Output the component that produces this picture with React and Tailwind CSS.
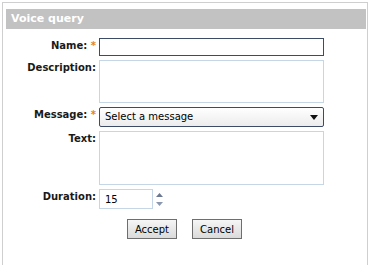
import React from 'react';

const font = { fontFamily: '"DejaVu Sans", Verdana, sans-serif' };

const Row = ({ label, required, children }) => (
  <div className="flex items-start">
    <div className="w-[90px] shrink-0 pt-[2px] text-right text-[10px] font-bold leading-[12px] text-[#1a1a1a]">
      {label}
      {required && <span className="text-[#e8801f]"> *</span>}
    </div>
    <div className="ml-[3px]">{children}</div>
  </div>
);

const App = () => {
  return (
    <div className="h-[265px] w-[370px] overflow-hidden bg-white" style={font}>
      <div className="ml-[2px] mt-[2px] h-[280px] w-[366px] border border-[#cfcfcf] pl-[3px]">
        {/* header */}
        <div className="mt-[6px] flex h-[20px] w-[360px] items-center bg-[#c2c2c2] pl-[5px] text-[11px] font-bold text-white">
          Voice query
        </div>

        <div className="mt-[9px] flex flex-col gap-[4px]">
          <Row label="Name:" required>
            <div className="h-[18px] w-[225px] border border-[#3c4b66] bg-white" />
          </Row>

          <Row label="Description:">
            <div className="h-[43px] w-[225px] border border-[#c5d6e6] bg-white" />
          </Row>

          <Row label="Message:" required>
            <div className="flex h-[20px] w-[225px] items-center justify-between rounded-[2px] border border-[#3c4b66] bg-gradient-to-b from-white to-[#ececec] pl-[5px] pr-[5px] text-[10px] text-black">
              <span className="leading-[12px]">Select a message</span>
              <svg width="8" height="5" viewBox="0 0 8 5">
                <path d="M0 0 H8 L4 5 Z" fill="#111" />
              </svg>
            </div>
          </Row>

          <Row label="Text:">
            <div className="h-[54px] w-[225px] border border-[#c5d6e6] bg-white" />
          </Row>

          <Row label="Duration:">
            <div className="flex items-center">
              <div className="flex h-[20px] w-[54px] items-center border border-[#c5d6e6] bg-white pl-[5px] text-[10px] text-black">
                15
              </div>
              <svg className="ml-[3px]" width="7" height="13" viewBox="0 0 7 13">
                <path d="M3.5 0 L7 4 H0 Z" fill="#6b7892" />
                <path d="M0 9 H7 L3.5 13 Z" fill="#8a97ae" />
              </svg>
            </div>
          </Row>
        </div>

        <div className="mt-[10px] flex gap-[15px] pl-[121px]">
          <div className="flex h-[20px] w-[50px] items-center justify-center border border-[#6e6e6e] bg-gradient-to-b from-[#f6f6f6] to-[#dadada] text-[10px] text-black">
            Accept
          </div>
          <div className="flex h-[20px] w-[50px] items-center justify-center border border-[#6e6e6e] bg-gradient-to-b from-[#f6f6f6] to-[#dadada] text-[10px] text-black">
            Cancel
          </div>
        </div>
      </div>
    </div>
  );
};

export default App;
